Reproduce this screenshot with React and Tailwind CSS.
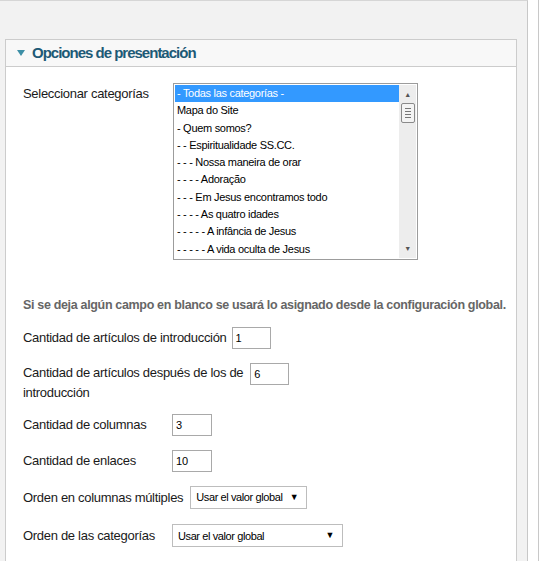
import React from "react";

const items = [
  "- Todas las categorías -",
  "Mapa do Site",
  "- Quem somos?",
  "- - Espiritualidade SS.CC.",
  "- - - Nossa maneira de orar",
  "- - - - Adoração",
  "- - - Em Jesus encontramos todo",
  "- - - - As quatro idades",
  "- - - - - A infância de Jesus",
  "- - - - - A vida oculta de Jesus",
];

const font = { fontFamily: '"Liberation Sans", Arial, sans-serif' };

function TextInput({ value, w }) {
  return (
    <div className={`h-[22px] ${w} border border-[#a9a9a9] bg-white flex items-center pl-[3px] text-[11px] tracking-normal text-black`}>
      {value}
    </div>
  );
}

function Select({ w }) {
  return (
    <div className={`h-[23px] ${w} border border-[#bdbdbd] bg-white flex items-center justify-between pl-[5px] pr-[8px] text-[11px] tracking-[-0.4px] text-black whitespace-nowrap`}>
      <span>Usar el valor global</span>
      <span className="text-[9px] leading-none">▼</span>
    </div>
  );
}

export default function App() {
  return (
    <div className="w-[546px] h-[561px] bg-white overflow-hidden flex" style={font}>
      <div className="w-[528px] h-full bg-[#f2f2f2] border-r border-[#c8c8c8] border-t border-t-[#d6d6d6] pt-[38px] pl-[5px]">
        <div className="w-[512px] h-[600px] border border-[#cccccc] bg-white">
          <div className="h-[27px] bg-[#f8f8f8] border-b border-[#cccccc] flex items-center pl-[11px]">
            <svg width="8" height="7" viewBox="0 0 8 7" className="mr-[7px]">
              <polygon points="0,0 8,0 4,6" fill="#3d8fa6" />
            </svg>
            <span className="text-[15px] font-bold text-[#1d5a76] tracking-[-1px]">Opciones de presentación</span>
          </div>
          <div className="pl-[17px] text-[13px] tracking-[-0.3px] text-[#1a1a1a] whitespace-nowrap">
            <div className="flex mt-[16px]">
              <div className="w-[150px] pt-[1px]">Seleccionar categorías</div>
              <div className="w-[245px] h-[177px] border border-[#9c9c9c] bg-white flex p-[1px]">
                <div className="flex-1 text-[11px] tracking-[-0.3px] leading-[17.3px] text-black">
                  {items.map((t, i) => (
                    <div key={i} className={i === 0 ? "bg-[#3399ff] text-white pl-[2px]" : "pl-[2px]"}>
                      {t}
                    </div>
                  ))}
                </div>
                <div className="w-[17px] bg-[#ededed] flex flex-col items-center justify-between py-[6px]">
                  <div className="flex flex-col items-center">
                    <span className="text-[7px] text-[#555] leading-none">▲</span>
                    <div className="mt-[5px] w-[14px] h-[20px] border border-[#8a8a8a] rounded-[2px] bg-[#f4f4f4] flex flex-col justify-center gap-[2px] px-[3px]">
                      <div className="h-[1px] bg-[#777]" />
                      <div className="h-[1px] bg-[#777]" />
                      <div className="h-[1px] bg-[#777]" />
                      <div className="h-[1px] bg-[#777]" />
                    </div>
                  </div>
                  <span className="text-[7px] text-[#555] leading-none">▼</span>
                </div>
              </div>
            </div>
            <div className="mt-[36px] text-[12.5px] font-bold text-[#666] tracking-[-0.33px]">
              Si se deja algún campo en blanco se usará lo asignado desde la configuración global.
            </div>
            <div className="flex items-center mt-[12px] h-[22px]">
              <span>Cantidad de artículos de introducción</span>
              <div className="ml-[5px]"><TextInput value="1" w="w-[39px]" /></div>
            </div>
            <div className="flex mt-[14px]">
              <div className="leading-[20px]">
                Cantidad de artículos después de los de<br />introducción
              </div>
              <div className="ml-[7px]"><TextInput value="6" w="w-[39px]" /></div>
            </div>
            <div className="flex items-center mt-[11px] h-[22px]">
              <span className="w-[149px]">Cantidad de columnas</span>
              <TextInput value="3" w="w-[40px]" />
            </div>
            <div className="flex items-center mt-[14px] h-[22px]">
              <span className="w-[149px]">Cantidad de enlaces</span>
              <TextInput value="10" w="w-[40px]" />
            </div>
            <div className="flex items-center mt-[14px] h-[23px]">
              <span>Orden en columnas múltiples</span>
              <div className="ml-[7px]"><Select w="w-[117px]" /></div>
            </div>
            <div className="flex items-center mt-[15px] h-[24px]">
              <span className="w-[149px]">Orden de las categorías</span>
              <Select w="w-[171px]" />
            </div>
          </div>
        </div>
      </div>
      <div className="w-[10px] h-full bg-white" />
      <div className="w-[1px] h-full bg-[#c8c8c8]" />
    </div>
  );
}
